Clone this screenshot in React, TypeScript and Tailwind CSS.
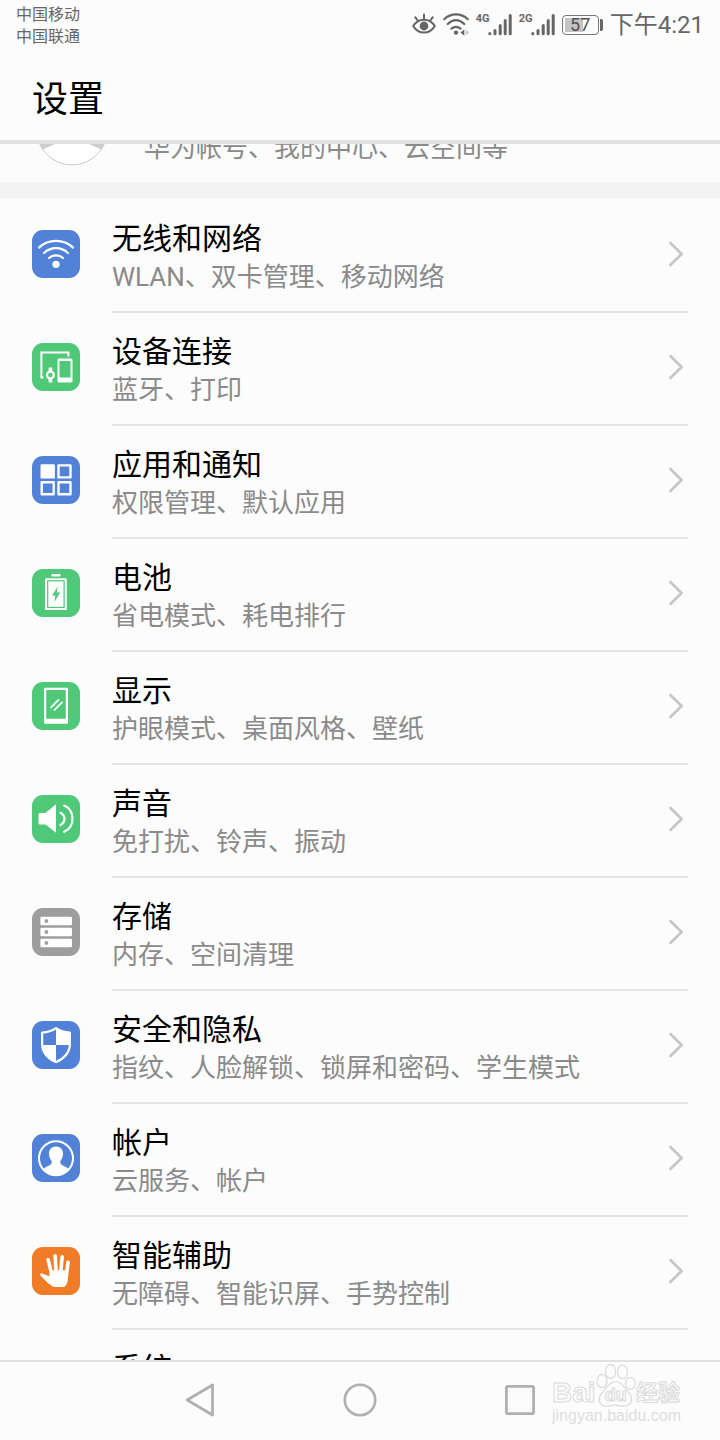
import React from "react";

interface SettingItem {
    title: string;
    summary: string;
    color: string;
    icon: React.ReactNode;
}

const WifiGlyph = () => (
    <g fill="none" stroke="#fff" strokeWidth="2.2" strokeLinecap="round">
        <path d="M7 17.6C16.5 8.6 31.5 8.6 41 17.6" />
        <path d="M12 23C19 16.6 29 16.6 36 23" />
        <path d="M17 28C21 24.4 27 24.4 31 28" />
        <circle cx="24" cy="34.3" r="3.6" fill="#fff" stroke="none" />
    </g>
);

const DevicesGlyph = () => (
    <g>
        <path d="M11.5 34.5H9.4V9.6H36.4V13.5" fill="none" stroke="#fff" strokeWidth="2" />
        <path
            fillRule="evenodd"
            fill="#fff"
            d="M27 15.5H39A1.5 1.5 0 0 1 40.5 17V38A1.5 1.5 0 0 1 39 39.5H27A1.5 1.5 0 0 1 25.5 38V17A1.5 1.5 0 0 1 27 15.5ZM27.5 18V34.5H38.5V18Z"
        />
        <rect x="16.6" y="24.5" width="3.6" height="15" fill="#fff" />
        <circle cx="18.4" cy="32" r="3.4" fill="#4fc978" stroke="#fff" strokeWidth="2.2" />
    </g>
);

const AppsGlyph = () => (
    <g fill="none" stroke="#fff" strokeWidth="2.4" strokeLinejoin="round">
        <rect x="9.7" y="9.4" width="12" height="12" fill="#fff" />
        <rect x="26.5" y="9.4" width="12" height="12" />
        <rect x="9.7" y="26.3" width="12" height="12" />
        <rect x="26.5" y="26.3" width="12" height="12" />
    </g>
);

const BatteryGlyph = () => (
    <g>
        <rect x="19.3" y="5" width="9.4" height="2.4" rx="1" fill="#fff" />
        <rect x="13" y="9.2" width="21.8" height="31.8" rx="1.2" fill="#fff" />
        <rect x="15.7" y="11.8" width="16.4" height="26.6" fill="none" stroke="#4fc978" strokeWidth="1.2" />
        <path d="M25.8 17.5L20 26.6H23.4L22.4 33L28.2 23.6H24.8Z" fill="#4fc978" />
    </g>
);

const DisplayGlyph = () => (
    <g>
        <path
            fillRule="evenodd"
            fill="#fff"
            d="M13 5.8H35A1 1 0 0 1 36 6.8V40.7A1 1 0 0 1 35 41.7H13A1 1 0 0 1 12 40.7V6.8A1 1 0 0 1 13 5.8ZM14.2 8V36.8H33.8V8Z"
        />
        <path d="M19 25.4L26.4 18M22.6 27.8L30 20.4" stroke="#fff" strokeWidth="1.8" strokeLinecap="round" />
    </g>
);

const SoundGlyph = () => (
    <g>
        <path d="M8 18H13.5L24 9.3V37.8L13.5 29.6H8A1.5 1.5 0 0 1 6.5 28.1V19.5A1.5 1.5 0 0 1 8 18Z" fill="#fff" />
        <path
            d="M28.5 17.8C33.8 21 33.8 26.8 28.5 30M32.2 10.6C43.2 15.5 43.2 32 32.2 36.8"
            fill="none"
            stroke="#fff"
            strokeWidth="2.2"
            strokeLinecap="round"
        />
    </g>
);

const StorageGlyph = () => (
    <g>
        {[8.7, 19.7, 30.7].map((y) => (
            <g key={y}>
                <rect x="8.4" y={y} width="31.6" height="8.6" rx="1.4" fill="#fff" />
                <circle cx="14.4" cy={y + 4.3} r="1.9" fill="#9e9e9e" />
            </g>
        ))}
    </g>
);

const ShieldGlyph = () => (
    <g>
        <path
            d="M24 7.2C28 10 33 11.4 37.9 11.6V23C37.9 31.5 32 38 24 41C16 38 10.1 31.5 10.1 23V11.6C15 11.4 20 10 24 7.2Z"
            fill="none"
            stroke="#fff"
            strokeWidth="2.2"
            strokeLinejoin="round"
        />
        <path d="M24 7.2C28 10 33 11.4 37.9 11.6V24H24ZM24 24V41C16 38 10.5 32 10.1 24Z" fill="#fff" />
    </g>
);

const AccountGlyph = () => (
    <g>
        <circle cx="24" cy="24.2" r="17" fill="none" stroke="#fff" strokeWidth="2" />
        <path
            d="M24 12.6C28.2 12.6 31 15.4 31 19.6C31 23.4 29.6 25.2 28.4 26.8V29.2C29.4 31.6 33 31.8 36.4 34.6C33 38.8 28.8 41 24 41C19.2 41 15 38.8 11.6 34.6C15 31.8 18.6 31.6 19.6 29.2V26.8C18.4 25.2 17 23.4 17 19.6C17 15.4 19.8 12.6 24 12.6Z"
            fill="#fff"
        />
    </g>
);

const HandGlyph = () => (
    <g stroke="#fff" strokeLinecap="round" strokeLinejoin="round" strokeWidth="3.6" fill="none">
        <path d="M16.2 12.8L19.6 27M23.2 8.8L24 26M30.2 9.8L28.6 26M36 15.2L34.4 29" />
        <path
            d="M9.4 27.6L16 34.4L21.8 38.8H31.6C34.2 37.4 34.8 34.6 34.8 29L33 24.6H19.4L18.4 31Z"
            fill="#fff"
            strokeWidth="2.6"
        />
    </g>
);

const settings: SettingItem[] = [
    { title: "无线和网络", summary: "WLAN、双卡管理、移动网络", color: "bg-[#5182d8]", icon: <WifiGlyph /> },
    { title: "设备连接", summary: "蓝牙、打印", color: "bg-[#4fc978]", icon: <DevicesGlyph /> },
    { title: "应用和通知", summary: "权限管理、默认应用", color: "bg-[#5182d8]", icon: <AppsGlyph /> },
    { title: "电池", summary: "省电模式、耗电排行", color: "bg-[#4fc978]", icon: <BatteryGlyph /> },
    { title: "显示", summary: "护眼模式、桌面风格、壁纸", color: "bg-[#4fc978]", icon: <DisplayGlyph /> },
    { title: "声音", summary: "免打扰、铃声、振动", color: "bg-[#4fc978]", icon: <SoundGlyph /> },
    { title: "存储", summary: "内存、空间清理", color: "bg-[#9e9e9e]", icon: <StorageGlyph /> },
    { title: "安全和隐私", summary: "指纹、人脸解锁、锁屏和密码、学生模式", color: "bg-[#5182d8]", icon: <ShieldGlyph /> },
    { title: "帐户", summary: "云服务、帐户", color: "bg-[#5182d8]", icon: <AccountGlyph /> },
    { title: "智能辅助", summary: "无障碍、智能识屏、手势控制", color: "bg-[#f07c28]", icon: <HandGlyph /> },
    { title: "系统", summary: "", color: "bg-[#9e9e9e]", icon: null },
];

const Signal = ({ label }: { label: string }) => (
    <div className="flex">
        <span className="w-3 text-[11px] leading-[11px] font-bold">{label}</span>
        <svg className="w-6 h-6" viewBox="0 0 24 24" stroke="currentColor" strokeWidth="3" strokeLinecap="round">
            <path d="M1.8 20.8V20.6M7 20.8V17.5M12.2 20.8V12.5M17.2 20.8V7.5M22.2 20.8V2.5" />
        </svg>
    </div>
);

const StatusBar = () => (
    <div className="flex items-start justify-between px-4 pt-1 h-[50px] text-[#666]">
        <div className="text-[16px] leading-[22px]">
            <p>中国移动</p>
            <p>中国联通</p>
        </div>
        <div className="flex items-center gap-[7px] pt-[9px]">
            <svg className="w-6 h-6" viewBox="0 0 24 24" fill="none" stroke="currentColor" strokeWidth="2" strokeLinecap="round">
                <path d="M1.2 13C6.5 4.6 17.5 4.6 22.8 13C17.5 21.8 6.5 21.8 1.2 13Z" />
                <circle cx="12" cy="13" r="4.4" fill="currentColor" stroke="none" />
                <path d="M12 6.2V1.6M5.8 7.6L3.2 4.2M18.2 7.6L20.8 4.2" />
            </svg>
            <svg className="w-[26px] h-6" viewBox="0 0 26 24" fill="none" stroke="currentColor" strokeWidth="2.2" strokeLinecap="round">
                <path d="M1.2 6.2C8 -.2 18 -.2 24.8 6.2M4.8 11C10 6.2 16 6.2 21.2 11M8.4 15.6C11.4 13.2 14.6 13.2 17.6 15.6" />
                <circle cx="13" cy="19.6" r="2.2" fill="currentColor" stroke="none" />
                <path d="M21.3 16.4V22.8L17.4 19.6Z" fill="currentColor" stroke="none" />
                <path d="M22.6 16.4V22.8L26 19.6Z" fill="#c8c8c8" stroke="none" />
            </svg>
            <Signal label="4G" />
            <Signal label="2G" />
            <div className="flex items-center gap-px">
                <div className="w-[37px] h-5 rounded-[4px] border border-[#777] p-[2px]">
                    <div className="h-full flex items-center justify-center bg-[linear-gradient(to_right,#c4c4c4_57%,transparent_57%)] text-[18px] leading-[14px] text-[#505050]">
                        57
                    </div>
                </div>
                <div className="w-[3px] h-3 rounded-r-[2px] bg-[#666]" />
            </div>
            <time className="text-[24px] leading-6">下午4:21</time>
        </div>
    </div>
);

const SettingRow = ({ item }: { item: SettingItem }) => (
    <li>
        <button type="button" className="w-full h-[113px] flex items-stretch px-8 text-left">
            <span className={`mt-[30px] mr-8 w-12 h-12 shrink-0 rounded-[11px] ${item.color}`}>
                <svg className="w-12 h-12" viewBox="0 0 48 48">
                    {item.icon}
                </svg>
            </span>
            <span className="flex-1 flex items-center justify-between border-b-2 border-[#e4e4e4] pb-[3px]">
                <span className="flex flex-col pt-[6px]">
                    <span className="text-[30px] leading-[40px] text-black">{item.title}</span>
                    <span className="min-h-9 text-[26px] leading-9 text-[#8a8a8a]">{item.summary}</span>
                </span>
                <svg className="w-6 h-[26px]" viewBox="0 0 24 26" fill="none" stroke="#c6c6c6" strokeWidth="2.6" strokeLinecap="round" strokeLinejoin="round">
                    <path d="M6.4 2L17.6 13L6.4 24" />
                </svg>
            </span>
        </button>
    </li>
);

const Watermark = () => (
    <div className="absolute right-10 bottom-4 w-32 text-[#fcfcfc] [-webkit-text-stroke:1px_#dadada]">
        <div className="flex items-end justify-between font-bold leading-[28px]">
            <span className="text-[28px] font-['Liberation_Sans',sans-serif]">Bai</span>
            <span className="relative w-10 h-[44px]">
                <svg className="w-10 h-[44px]" viewBox="0 0 40 44" fill="#fcfcfc" stroke="#dadada" strokeWidth="1.2">
                    <ellipse cx="6" cy="18" rx="5" ry="6.6" />
                    <ellipse cx="14.6" cy="8.4" rx="5" ry="7" />
                    <ellipse cx="26.4" cy="9" rx="5" ry="7" />
                    <ellipse cx="34.4" cy="20.4" rx="4.8" ry="6" />
                    <path d="M20 18.5C25.5 18.5 27.5 24 32 28.6C37.5 34 37 42 28.6 43C24.6 43.4 22.4 42.2 19 42.2C15.6 42.2 13.4 43.6 9 43C2.4 42 1.6 34.6 6 30C10.4 25.2 13.6 18.5 20 18.5Z" />
                </svg>
                <span className="absolute inset-x-0 bottom-0 text-center text-[18px] leading-6 font-['Liberation_Sans',sans-serif]">du</span>
            </span>
            <span className="text-[22px]">经验</span>
        </div>
        <p className="text-[16px] leading-[17px] font-['Liberation_Sans',sans-serif] [-webkit-text-stroke:0] text-[#dedede] whitespace-nowrap">
            jingyan.baidu.com
        </p>
    </div>
);

const NavBar = () => (
    <nav className="relative h-20 shrink-0 border-t-2 border-[#e0e0e0] flex items-center justify-center gap-28">
        <button type="button" aria-label="返回" className="w-12 h-12">
            <svg className="w-12 h-12" viewBox="0 0 48 48" fill="none" stroke="#b0b0b0" strokeWidth="2.8" strokeLinejoin="round">
                <path d="M36.5 8V38L11.2 23Z" />
            </svg>
        </button>
        <button type="button" aria-label="主页" className="w-12 h-12">
            <svg className="w-12 h-12" viewBox="0 0 48 48" fill="none" stroke="#b0b0b0" strokeWidth="2.6">
                <circle cx="24" cy="23" r="15.2" />
            </svg>
        </button>
        <button type="button" aria-label="最近任务" className="w-12 h-12">
            <svg className="w-12 h-12" viewBox="0 0 48 48" fill="none" stroke="#b0b0b0" strokeWidth="2.8">
                <rect x="10.4" y="9.4" width="27.2" height="27.2" rx="1.4" />
            </svg>
        </button>
        <Watermark />
    </nav>
);

export default function App() {
    return (
        <div className="h-screen flex flex-col overflow-hidden bg-[#fcfcfc] font-['Roboto','Noto_Sans_CJK_SC',sans-serif]">
            <header className="shrink-0 border-b-4 border-[#e0e0e0]">
                <StatusBar />
                <h1 className="px-8 h-[90px] pt-6 text-[36px] leading-[52px] text-black">设置</h1>
            </header>

            <main className="flex-1 min-h-0 overflow-hidden">
                {/* account entry, scrolled mostly under the header */}
                <div className="h-[38px] flex items-end overflow-hidden pl-9">
                    <svg className="w-[72px] h-[72px] mb-4 mr-9 shrink-0" viewBox="0 0 72 72">
                        <circle cx="36" cy="35.5" r="35.4" fill="#fff" stroke="#c8c8c8" />
                        <path d="M2 46L3.6 50L6.6 55.6L19 50V46ZM70 46L68.4 50L65.4 55.6L53 50V46Z" fill="#cdcdcd" />
                    </svg>
                    <p className="mb-4 text-[26px] leading-9 text-[#8a8a8a] whitespace-nowrap">华为帐号、我的中心、云空间等</p>
                </div>
                <div className="h-4 bg-[#f3f3f3]" />
                <ul className="pt-0.5">
                    {settings.map((item) => (
                        <SettingRow key={item.title} item={item} />
                    ))}
                </ul>
            </main>

            <NavBar />
        </div>
    );
}
